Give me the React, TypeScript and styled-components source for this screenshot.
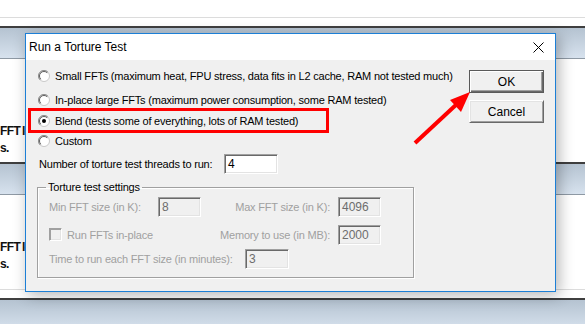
import styled, { createGlobalStyle } from "styled-components";

const GlobalStyle = createGlobalStyle`
  html, body {
    margin: 0;
    padding: 0;
    background: #ffffff;
  }
`;

const Page = styled.div`
  position: relative;
  width: 585px;
  height: 324px;
  overflow: hidden;
  background: #ffffff;
  display: flex;
  flex-direction: column;
  font-family: "Liberation Sans", Arial, sans-serif;
`;

const Panel = styled.div<{ $h: number; $top: number }>`
  height: ${(p) => p.$h}px;
  padding-top: ${(p) => p.$top}px;
  box-sizing: border-box;
  display: flex;
  flex-direction: column;
  flex-shrink: 0;
`;

const PanelText = styled.div`
  font-family: "Liberation Sans", Arial, sans-serif;
  font-weight: bold;
  font-size: 12px;
  letter-spacing: -0.6px;
  word-spacing: -1px;
  line-height: 17px;
  color: #111;
  white-space: nowrap;
`;

const Divider = styled.div`
  margin-top: auto;
  margin-bottom: 8px;
  height: 1px;
  background: #dcdcdc;
`;

const Band = styled.div`
  flex-shrink: 0;
  height: 30px;
  border-top: 2px solid #3f3f3f;
  border-bottom: 1px solid #8e99a4;
  background: linear-gradient(#b5c3d1, #d7e2ee);
`;

const Dialog = styled.div`
  position: absolute;
  left: 25px;
  top: 33px;
  width: 531px;
  height: 259px;
  box-sizing: border-box;
  border: 1px solid #1c7fd6;
  background: #f0f0f0;
  box-shadow: 3px 3px 14px rgba(0, 0, 0, 0.3);
  display: flex;
  flex-direction: column;
  font-size: 11px;
  letter-spacing: -0.2px;
  color: #000;
`;

const TitleBar = styled.div`
  height: 26px;
  flex-shrink: 0;
  background: #ffffff;
  display: flex;
  align-items: center;
  padding-left: 3px;
`;

const Title = styled.span`
  font-size: 12px;
  letter-spacing: 0;
  color: #000;
`;

const CloseButton = styled.div`
  margin-left: auto;
  width: 34px;
  height: 26px;
  display: flex;
  align-items: center;
  justify-content: center;
`;

const Body = styled.div`
  flex: 1;
  display: flex;
`;

const LeftColumn = styled.div`
  padding-left: 12px;
  padding-top: 8px;
  display: flex;
  flex-direction: column;
`;

const RadioRow = styled.div<{ $mt?: number }>`
  display: flex;
  align-items: center;
  gap: 5px;
  height: 16px;
  margin-top: ${(p) => p.$mt ?? 0}px;
  white-space: nowrap;
`;

const RadioMark = styled.svg`
  flex-shrink: 0;
  width: 12px;
  height: 12px;
`;

const Highlight = styled.div`
  box-sizing: border-box;
  width: 301px;
  height: 25px;
  margin-left: -10px;
  padding-left: 7px;
  border: 3px solid #ff0000;
  display: flex;
  align-items: center;
`;

const FieldRow = styled.div<{ $mt: number; $labelWidth: number }>`
  display: grid;
  grid-template-columns: ${(p) => p.$labelWidth}px auto;
  align-items: center;
  margin-top: ${(p) => p.$mt}px;
  padding-left: 1px;
  white-space: nowrap;
`;

const Field = styled.div<{ $w: number; $disabled?: boolean }>`
  width: ${(p) => p.$w}px;
  height: 20px;
  box-sizing: border-box;
  padding-left: 3px;
  display: flex;
  align-items: center;
  font-size: 12px;
  letter-spacing: 0;
  color: ${(p) => (p.$disabled ? "#6d6d6d" : "#000")};
  background: ${(p) => (p.$disabled ? "#f0f0f0" : "#ffffff")};
  border-style: solid;
  border-width: 1px;
  border-color: #a0a0a0 #ffffff #ffffff #a0a0a0;
  box-shadow: inset 1px 1px 0 #696969, inset -1px -1px 0 #e3e3e3;
`;

const Group = styled.fieldset`
  margin: 7px 0 0 -1px;
  width: 377px;
  box-sizing: border-box;
  padding: 3px 0 8px 11px;
  border: 1px solid #a0a0a0;
  box-shadow: inset 1px 1px 0 #ffffff, 1px 1px 0 #ffffff;
`;

const Legend = styled.legend`
  padding: 0 2px;
  margin-left: -3px;
  line-height: 13px;
  color: #000;
`;

const SettingsGrid = styled.div`
  display: grid;
  grid-template-columns: 109px 43px 137px 43px;
  grid-template-rows: 19px 19px;
  row-gap: 9px;
  align-items: center;
  white-space: nowrap;
`;

const Muted = styled.span<{ $right?: boolean; $span?: number }>`
  color: #a0a0a0;
  padding-right: ${(p) => (p.$right ? 8 : 0)}px;
  grid-column: span ${(p) => p.$span ?? 1};
  display: flex;
  align-items: center;
  justify-content: ${(p) => (p.$right ? "flex-end" : "flex-start")};
  gap: 5px;
`;

const TimeRow = styled.div`
  display: flex;
  align-items: center;
  margin-top: 5px;
  white-space: nowrap;
`;

const TimeLabel = styled(Muted)`
  width: 196px;
`;

const CheckBox = styled.span`
  width: 13px;
  height: 13px;
  box-sizing: border-box;
  border-style: solid;
  border-width: 1px;
  border-color: #a0a0a0 #ffffff #ffffff #a0a0a0;
  box-shadow: inset 1px 1px 0 #a0a0a0, inset -1px -1px 0 #e3e3e3;
  background: #f0f0f0;
`;

const ButtonColumn = styled.div`
  margin-left: auto;
  padding-top: 10px;
  padding-right: 11px;
  display: flex;
  flex-direction: column;
  gap: 7px;
`;

const Button = styled.div<{ $default?: boolean }>`
  width: 75px;
  height: 23px;
  box-sizing: border-box;
  display: flex;
  align-items: center;
  justify-content: center;
  background: #f0f0f0;
  font-size: 12px;
  letter-spacing: 0;
  color: #000;
  border-style: solid;
  border-width: 1px;
  border-color: ${(p) =>
    p.$default ? "#5a5a5a" : "#ffffff #696969 #696969 #ffffff"};
  box-shadow: ${(p) =>
    p.$default
      ? "inset 1px 1px 0 #ffffff, inset -1px -1px 0 #696969, inset -2px -2px 0 #a0a0a0"
      : "inset 1px 1px 0 #e3e3e3, inset -1px -1px 0 #a0a0a0"};
`;

const Arrow = styled.svg`
  position: absolute;
  left: 0;
  top: 0;
  pointer-events: none;
`;

const Radio = ({ checked }: { checked?: boolean }) => (
  <RadioMark viewBox="0 0 12 12">
    <circle cx="6" cy="6" r="5.5" fill="#ffffff" stroke="#c8c8c8" />
    <path d="M2.1 9.9 A5.5 5.5 0 0 1 9.9 2.1" stroke="#8c8c8c" fill="none" />
    <path d="M2.8 9.2 A4.5 4.5 0 0 1 9.2 2.8" stroke="#5e5e5e" fill="none" />
    {checked && <circle cx="6" cy="6" r="2" fill="#000" />}
  </RadioMark>
);

export default function App() {
  return (
    <Page>
      <GlobalStyle />
      <Panel $h={26} $top={0}>
        <Divider />
      </Panel>
      <Band />
      <Panel $h={103} $top={64}>
        <PanelText>FFT lengths</PanelText>
        <PanelText>s.</PanelText>
        <Divider />
      </Panel>
      <Band />
      <Panel $h={103} $top={44}>
        <PanelText>FFT lengths</PanelText>
        <PanelText>s.</PanelText>
        <Divider />
      </Panel>
      <Band />

      <Dialog>
        <TitleBar>
          <Title>Run a Torture Test</Title>
          <CloseButton>
            <svg width="11" height="11" viewBox="0 0 11 11">
              <path d="M0.5 0.5 L10.5 10.5 M10.5 0.5 L0.5 10.5" stroke="#000" strokeWidth="1" />
            </svg>
          </CloseButton>
        </TitleBar>
        <Body>
          <LeftColumn>
            <RadioRow>
              <Radio />
              Small FFTs (maximum heat, FPU stress, data fits in L2 cache, RAM not tested much)
            </RadioRow>
            <RadioRow $mt={8}>
              <Radio />
              In-place large FFTs (maximum power consumption, some RAM tested)
            </RadioRow>
            <Highlight>
              <RadioRow>
                <Radio checked />
                Blend (tests some of everything, lots of RAM tested)
              </RadioRow>
            </Highlight>
            <RadioRow>
              <Radio />
              Custom
            </RadioRow>
            <FieldRow $mt={5} $labelWidth={185}>
              <span>Number of torture test threads to run:</span>
              <Field $w={54}>4</Field>
            </FieldRow>
            <Group>
              <Legend>Torture test settings</Legend>
              <SettingsGrid>
                <Muted>Min FFT size (in K):</Muted>
                <Field $w={43} $disabled>8</Field>
                <Muted $right>Max FFT size (in K):</Muted>
                <Field $w={43} $disabled>4096</Field>
                <Muted $span={2}>
                  <CheckBox />
                  Run FFTs in-place
                </Muted>
                <Muted $right>Memory to use (in MB):</Muted>
                <Field $w={43} $disabled>2000</Field>
              </SettingsGrid>
              <TimeRow>
                <TimeLabel>Time to run each FFT size (in minutes):</TimeLabel>
                <Field $w={44} $disabled>3</Field>
              </TimeRow>
            </Group>
          </LeftColumn>
          <ButtonColumn>
            <Button $default>OK</Button>
            <Button>Cancel</Button>
          </ButtonColumn>
        </Body>
      </Dialog>

      <Arrow width="585" height="324" viewBox="0 0 585 324">
        <line x1="415" y1="143" x2="458" y2="103" stroke="#ff0000" strokeWidth="4" />
        <polygon points="470,92 461,112 450,100" fill="#ff0000" />
      </Arrow>
    </Page>
  );
}
